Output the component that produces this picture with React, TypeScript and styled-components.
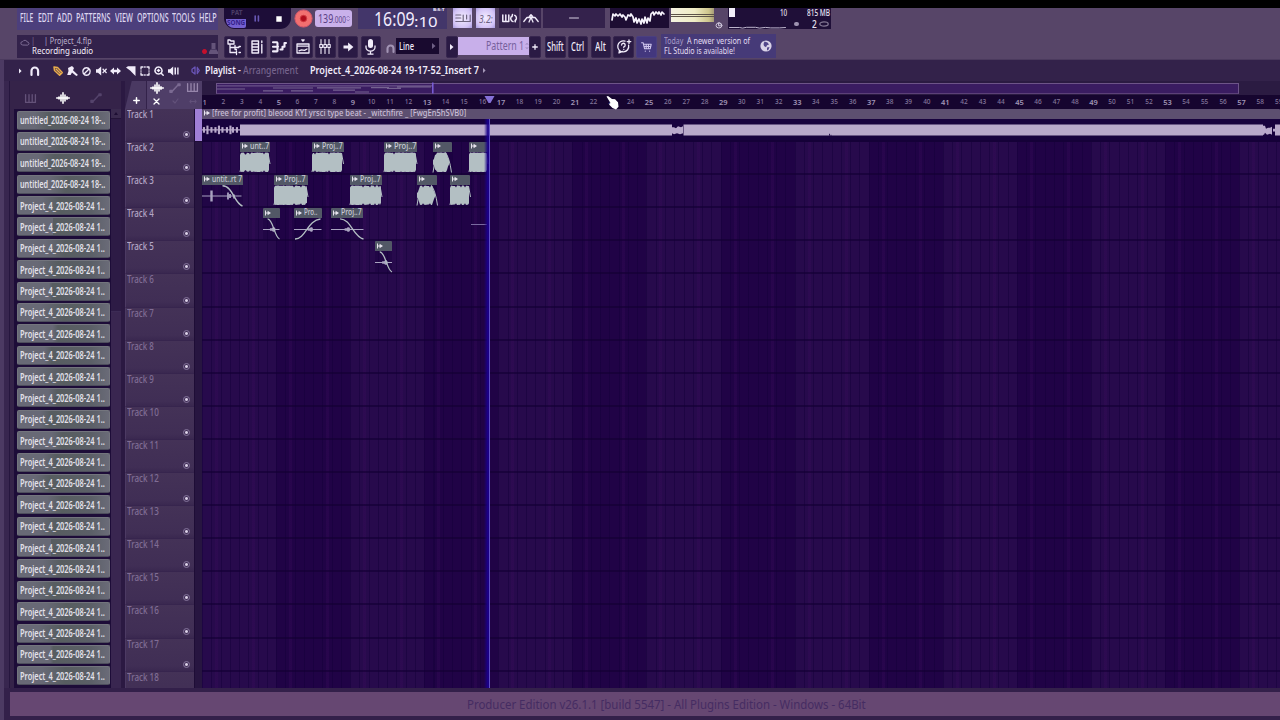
import React, { useLayoutEffect, useRef } from "react";
import styled, { createGlobalStyle, css } from "styled-components";

const Global = createGlobalStyle`
  * { box-sizing: border-box; }
  body { margin: 0; background: #000; overflow: hidden; font-family: "Noto Sans", "Open Sans", sans-serif; }
  svg { display: block; flex: none; overflow: visible; }
`;

/* ---------- text squeezed to a fixed width ---------- */
const FitBox = styled.span<{ $w: number }>`
  display: block; flex: none; width: ${p => p.$w}px; white-space: pre; line-height: 1;
`;
const FitInner = styled.span`
  display: inline-block; transform-origin: 0 50%; white-space: pre;
`;
function Fit({ w, children }: { w: number; children: React.ReactNode }) {
  const ref = useRef<HTMLSpanElement>(null);
  useLayoutEffect(() => {
    const el = ref.current;
    if (el && el.offsetWidth) el.style.transform = `scaleX(${w / el.offsetWidth})`;
  }, [w, children]);
  return <FitBox $w={w}><FitInner ref={ref}>{children}</FitInner></FitBox>;
}

/* ---------- frame ---------- */
const Screen = styled.div`
  width: 1280px; height: 720px; display: flex; flex-direction: column; background: #000; overflow: hidden; padding-top: 8px;
`;
const Toolbar = styled.header`
  height: 52px; flex: none; background: #574568; display: flex; flex-direction: column; padding-left: 17px;
  border-bottom: 1px solid #4b3a5e;
`;
const ToolRow = styled.div<{ $h: number; $mt?: number }>`
  display: flex; align-items: flex-start; height: ${p => p.$h}px; margin-top: ${p => p.$mt || 0}px;
`;
const Block = styled.div<{ $w: number; $h: number; $ml?: number; $mt?: number; $bg?: string; $r?: string }>`
  flex: none; width: ${p => p.$w}px; height: ${p => p.$h}px; margin-left: ${p => p.$ml || 0}px; margin-top: ${p => p.$mt || 0}px;
  background: ${p => p.$bg || "transparent"}; border-radius: ${p => p.$r || 0};
  display: flex; align-items: center; justify-content: center; color: #f1ecfa;
`;
const Menu = styled.nav`
  flex: none; width: 201px; height: 22px; background: #4c3f7c; color: #ddd6f0; display: flex; align-items: center; padding: 0 0 2px 3px;
  font-size: 12.5px; font-weight: 500;
`;
const MenuItem = styled.span<{ $gap: number }>`margin-right: ${p => p.$gap}px;`;
const Hint = styled.div`
  flex: none; width: 201px; height: 23px; background: #33224b; display: flex; align-items: stretch; color: #cfc6dc; font-size: 9.5px;
`;
const HintLines = styled.div`display: flex; flex-direction: column; gap: 1.5px; padding-top: 1px; width: 170px; color: #c9c0d8;`;
const HintLine = styled.div<{ $strong?: boolean }>`
  display: flex; align-items: center; height: 9px; gap: 10px; padding-left: ${p => (p.$strong ? 0 : 0)}px;
  color: ${p => (p.$strong ? "#f3eefa" : "#bdb3cd")};
`;
const HintIcons = styled.div`display: flex; align-items: flex-end; gap: 2px; padding-bottom: 4px;`;

const Pill = styled.div`
  flex: none; width: 67px; height: 21px; margin-left: 6px; background: #1d0d38; border-radius: 0 0 11px 11px; display: flex; overflow: hidden; align-items: stretch;
`;
const ModeSwitch = styled.div`width: 22px; display: flex; flex-direction: column; align-items: center; font-size: 7px; font-weight: 700;`;
const PatLabel = styled.div`height: 11px; padding: 1px 0 0 2px; color: #4b3d66;`;
const SongLabel = styled.div`
  height: 8.5px; width: 20px; margin-left: 2px; background: #7460cf; color: #33208a; border-radius: 0 0 2px 8px; padding: 0 0 0 1px;
`;
const PillCell = styled.div`width: 22px; display: flex; align-items: center; justify-content: center;`;
const Tempo = styled.div`
  flex: none; width: 37px; height: 17px; margin: 2px 0 0 2px; background: #c9b1ea; border-radius: 3px; display: flex; align-items: center; padding-left: 3px;
  color: #5a4185; font-size: 13px;
`;
const TempoSmall = styled.span`font-size: 9.5px; padding-top: 3px;`;
const Clock = styled.div`
  flex: none; width: 89px; height: 21px; margin-left: 6px; background: #43366a; display: flex; align-items: center; padding-left: 15.5px; color: #f1ecff; font-size: 20px;
`;
const ClockTail = styled.div`display: flex; flex-direction: column; font-size: 14px; height: 21px; justify-content: space-between;`;
const ClockUnit = styled.div`font-size: 4px; font-weight: 700; padding-left: 19px; height: 4px; line-height: 1;`;
const Glow = styled.div<{ $ml: number }>`
  flex: none; width: 19px; height: 20px; margin: 0 0 0 ${p => p.$ml}px; display: flex; align-items: center; justify-content: center;
  background: radial-gradient(#f4edff, #d3c3f6 70%, #a99be0); color: #6a6080; font-size: 11px; font-style: italic;
`;
const Meter = styled.div`
  flex: none; width: 43px; height: 14px; margin-left: 2px; display: flex; flex-direction: column; gap: 1px; background: #5d5448;
`;
const MeterBar = styled.div<{ $h: number }>`height: ${p => p.$h}px; background: linear-gradient(90deg, #f4f2e0, #efecc4 55%, #cdc58c 88%, #a69b78);`;
const MeterSide = styled.div`flex: none; width: 10px; height: 22px; display: flex; align-items: flex-end; justify-content: center;`;
const Cpu = styled.div`
  flex: none; width: 103px; height: 21px; margin-left: 4px; background: #1f0f38; color: #e8e2f2; display: flex; font-size: 9px; font-weight: 500;
`;
const CpuGraph = styled.div`width: 60px; height: 21px; display: flex; flex-direction: column; justify-content: space-between; padding: 0 1px;`;
const CpuTop = styled.div`display: flex; justify-content: space-between; align-items: flex-start; height: 10px;`;
const CpuBar = styled.div`width: 6px; height: 9px; background: #f2eefa;`;
const CpuMem = styled.div`flex: 1; display: flex; flex-direction: column; align-items: flex-end; justify-content: space-between; padding-right: 1px;`;
const CpuVoices = styled.div`display: flex; align-items: center; gap: 2px; height: 10px; font-size: 10px; padding-right: 1px;`;
const CpuDot = styled.i`width: 5px; height: 4px; border-radius: 2px; background: #9e93b0; margin-right: 11px;`;

const ToolButton = styled.div<{ $w?: number; $ml?: number; $blue?: boolean }>`
  flex: none; width: ${p => p.$w || 20.5}px; height: 22px; margin-left: ${p => (p.$ml === undefined ? 2.25 : p.$ml)}px; margin-top: .5px;
  background: ${p => (p.$blue ? "#43377e" : "#2a1a44")}; border: 1px solid ${p => (p.$blue ? "#4a3f80" : "#37264f")}; border-radius: 2px;
  display: flex; align-items: center; justify-content: center; color: #f1ecfa; font-size: 12px; font-weight: 500;
`;
const SnapBox = styled.div`
  flex: none; width: 43px; height: 16px; margin: 3px 0 0 1px; background: #190a2f; display: flex; align-items: center; justify-content: space-between; padding: 0 3px;
  color: #f1ecfa; font-size: 10px; font-weight: 500;
`;
const PatternName = styled.div`
  flex: none; width: 71px; height: 18px; margin-top: 2px; background: #c8afea; color: #76609c; font-size: 13px; display: flex; align-items: center; justify-content: flex-end; gap: 1px;
  padding-bottom: 1px;
`;
const News = styled.div`
  flex: none; width: 115px; height: 24px; margin-left: 4px; margin-top: -1px; background: #463a78; display: flex; align-items: center; color: #e2dcf2; font-size: 9.5px;
  padding-left: 3px;
`;
const NewsLines = styled.div`display: flex; flex-direction: column; gap: 0; width: 96px;`;
const NewsLine = styled.div`display: flex; gap: 4px; height: 10px; align-items: center;`;
const Faint = styled.span`color: #a79cc8;`;

const TitleBar = styled.div`
  height: 21px; flex: none; background: #33224a; display: flex; align-items: center; color: #f1ecfa; font-size: 10.5px; font-weight: 600;
  padding-left: 15px; border-left: 4px solid #4c3a63;
`;
const TitleIcons = styled.div`display: flex; align-items: center; width: 180px; flex: none; padding-top: 1px;`;
const Muted = styled.span`color: #75628c; font-weight: 500;`;

/* ---------- work area ---------- */
const Work = styled.main`height: 607px; flex: none; display: flex; background: #2b1942;`;
const Edge = styled.div`width: 10px; flex: none; background: #38264f; border-left: 4px solid #4c3a63; border-right: 1px solid #26163e;`;
const Picker = styled.aside`width: 111px; flex: none; display: flex; flex-direction: column; background: #352349;`;
const PickerTabs = styled.div`height: 28px; flex: none; display: flex; align-items: center; gap: 20px; padding: 6px 0 0 15px;`;
const PickerBody = styled.div`flex: 1; display: flex; min-height: 0;`;
const PickerList = styled.div`
  width: 97px; margin-left: 4px; flex: none; background: #1d0c38; display: flex; flex-direction: column; gap: 2.38px; padding: 1.5px 0 0 2.5px; overflow: hidden;
`;
const PickerItem = styled.div<{ $i: number }>`
  flex: none; height: 19px; width: 93px; border-radius: 2px; border: 1px solid #73757d; border-bottom-color: #4d4d5c;
  background: linear-gradient(90deg, #686976 0 ${p => 18 + ((p.$i * 13) % 22)}%, #575d60 ${p => 34 + ((p.$i * 13) % 20)}%, #5b5f67 80%, #6a6b78);
  display: flex; align-items: center; padding-left: 2px; color: #e3e1ea; font: 600 10px "Noto Sans", sans-serif;
`;
const PickerScroll = styled.div`width: 10px; flex: none; background: #241438; display: flex; flex-direction: column; align-items: center;`;
const ScrollButton = styled.div`width: 10px; height: 9px; background: #3a2a4e; display: flex; align-items: center; justify-content: center;`;
const ScrollThumb = styled.div`width: 10px; height: 193px; margin-top: 1px; background: #2d1b45; border-bottom: 1px solid #3c2b55;`;
const ScrollRest = styled.div`width: 10px; flex: 1; background: #392650;`;

const Arrange = styled.section`flex: 1; min-width: 0; display: flex; flex-direction: column; margin-left: 4px;`;
const Head = styled.div`height: 28px; flex: none; display: flex;`;
const Corner = styled.div`width: 77px; flex: none; display: flex; background: #33224a;`;
const CornerAdd = styled.div`
  width: 21px; height: 28px; background: #4a3962; clip-path: polygon(32% 0, 100% 0, 100% 100%, 0 100%); display: flex; align-items: flex-end; justify-content: center; padding: 0 0 5.5px 2px;
`;
const CornerGrid = styled.div`
  width: 56px; height: 28px; border-left: 1px solid #33224a; background: #4f3e68; display: grid; grid-template-columns: 19px 18px 17px; grid-template-rows: 13px 14px; place-items: center;
`;
const HeadRight = styled.div`flex: 1; min-width: 0; display: flex; flex-direction: column;`;
const Overview = styled.div`height: 14px; flex: none; background: #2b1b42; display: flex; padding: 1.5px 0 1.5px 14px;`;
const OverviewTrack = styled.div`
  width: 1023px; height: 11.5px; background: #3a1c61; border: 1px solid #6d5488; border-top-width: 1.5px; border-bottom-color: #5c4079; display: flex;
`;
const Ruler = styled.div`
  position: relative; height: 14px; flex: none; background: #16052f; display: flex; align-items: center; overflow: hidden;
`;
const RulerMark = styled.span<{ $major: boolean }>`
  flex: none; width: 18.52px; text-align: center; color: ${p => (p.$major ? "#a195b6" : "#83769b")};
  font: ${p => (p.$major ? "600 7.5px" : "500 6.5px")} "Noto Sans", sans-serif; line-height: 14px;
  &:first-child { margin-left: -6.5px; color: #a195b6; font-size: 7.5px; }
`;
const Marker = styled.div`position: absolute; left: 281.5px; top: 1px;`;

const Rows = styled.div`position: relative; flex: 1; min-height: 0; display: flex;`;
const Headers = styled.div`width: 77px; flex: none; overflow: hidden; background: #1e0d36;`;
const HeaderRow = styled.div`height: 33.1px; display: flex;`;
const TrackName = styled.div<{ $used: boolean }>`
  width: 69px; height: 33.1px; display: flex; justify-content: space-between; padding: 0 4px 0 .5px; border-left: 1px solid #4c3a63;
  background: linear-gradient(#443257, #402e55 85%, #3a2850); border-bottom: 1px solid #37254e;
  color: ${p => (p.$used ? "#b3a6c6" : "#806d95")}; font: 500 10px "Noto Sans", sans-serif; line-height: 1;
`;
const Led = styled.i`
  align-self: flex-end; width: 7px; height: 7px; margin-bottom: 3px; border-radius: 50%; border: 1px solid #84749b; background: radial-gradient(#e0d6ec 25%, #412f57 55%);
`;
const HeaderStrip = styled.div<{ $on: boolean }>`
  width: 7px; margin-left: 1px; height: ${p => (p.$on ? 32 : 33.1)}px; background: ${p => (p.$on ? "#a07fd6" : "#271540")};
`;
const Lanes = styled.div`position: relative; flex: 1; min-width: 0; overflow: hidden;
  background:
    repeating-linear-gradient(90deg, rgba(20,0,58,.5) 0 1px, transparent 1px 9.26px),
    repeating-linear-gradient(90deg, transparent 0 13px, rgba(58,12,92,.3) 13px 16px, transparent 16px 37.04px),
    repeating-linear-gradient(90deg, #270a4c 0 74.08px, #200346 74.08px 148.16px);
`;
const Lane = styled.div<{ $first?: boolean }>`
  position: relative; height: 33.1px; border-bottom: 2px solid rgba(20,0,52,.62);
  ${p => p.$first && css`background: #1a0440;`}
`;
const Clip = styled.div<{ $x: number; $w: number }>`
  position: absolute; left: ${p => p.$x}px; top: 0; width: ${p => p.$w}px; height: 31px; background: rgba(22,0,60,.35);
`;
const ClipHead = styled.div<{ $audio?: boolean }>`
  height: 9.5px; background: ${p => (p.$audio ? "#5d4f70" : "#525866")}; border-radius: 1px 1px 0 0; display: flex; align-items: center; gap: 2px; padding-left: 2px;
  color: ${p => (p.$audio ? "#c9bdd6" : "#c9cbd6")}; font: 500 8.5px "Noto Sans", sans-serif; padding-bottom: ${p => (p.$audio ? 1.5 : 1)}px;
`;
const Trace = styled.div<{ $x: number; $y: number; $w: number }>`
  position: absolute; left: ${p => p.$x}px; top: ${p => p.$y}px; width: ${p => p.$w}px; height: 1px; background: #7a6aa0;
`;
const Playhead = styled.div`
  position: absolute; left: 281.5px; top: 9.5px; bottom: 0; width: 6.5px; border-right: 1.5px solid #5f50c4;
  background: linear-gradient(90deg, rgba(30,0,150,0), rgba(26,0,140,.9) 70%);
`;
const Cursor = styled.div`position: absolute; left: 606px; top: 95px; z-index: 5;`;

const Bottom = styled.footer`
  flex: 1; display: flex; background: #33204a; padding: 4px 0 4px 6px; border-left: 4px solid #4c3a63;
`;
const BottomBar = styled.div`
  flex: 1; background: #664772; color: #452c62; display: flex; align-items: center; justify-content: center; font-size: 12.5px; padding: 3px 0 0 43px;
`;

/* ---------- icons ---------- */
type IcoProps = { w: number; h: number; c?: string; s?: number; fill?: boolean; d: string };
const Ico = ({ w, h, c = "#f1ecfa", s = 1.2, fill, d }: IcoProps) => (
  <svg width={w} height={h} viewBox={`0 0 ${w} ${h}`}>
    <path d={d} fill={fill ? c : "none"} stroke={fill ? "none" : c} strokeWidth={s} strokeLinejoin="round" strokeLinecap="round" />
  </svg>
);
const WaveIcon = ({ c = "#fff" }) => (
  <Ico w={14} h={12} c={c} s={1.6} d="M.7 6h12.6M3 5v2M5 3v6M7 .8v10.4M9 3v6M11 4.7v2.6" />
);
const KeysIcon = ({ c = "#6d5c82" }) => <Ico w={11} h={9} c={c} s={1.3} d="M.6.6v7.8h9.8V.6M4 .6v7M7.2 .6v7" />;
const LineIcon = ({ c = "#6d5c82" }) => <Ico w={12} h={10} c={c} s={1.5} d="M1 9h1.5L9 2M9 1h2v1.5H9zM1 7.5v1.8h2V7.6z" />;
const ArrowHead = ({ c = "#f1ecfa" }) => <Ico w={4} h={6} c={c} fill d="M0 0l3.5 3L0 6z" />;
const ClipIcon = () => <Ico w={6} h={6} c="#e8e4ee" fill d="M0 .5h1v5H0zM1 2.4h1.6V.8L6 3 2.6 5.2V3.6H1z" />;

/* ---------- data ---------- */
type Shape = "full" | "out" | "in" | "fade" | "hit";
type ClipData = { x: number; w: number; label?: string; lw?: number; shape: Shape };
const lanes: ClipData[][] = [
  [],
  [
    { x: 38, w: 30, label: "unt..7", lw: 19, shape: "full" },
    { x: 110, w: 31.5, label: "Proj..7", lw: 21, shape: "full" },
    { x: 182, w: 33, label: "Proj..7", lw: 23, shape: "full" },
    { x: 231, w: 18.5, shape: "fade" },
    { x: 266.5, w: 19, shape: "full" },
  ],
  [
    { x: 0, w: 40.5, label: "untit..rt 7", lw: 30, shape: "hit" },
    { x: 72, w: 34, label: "Proj..7", lw: 22, shape: "full" },
    { x: 148, w: 32, label: "Proj..7", lw: 21, shape: "full" },
    { x: 214.5, w: 20.5, shape: "fade" },
    { x: 247.5, w: 20.5, shape: "full" },
  ],
  [
    { x: 61, w: 16.5, shape: "out" },
    { x: 92, w: 27.5, label: "Pro..", lw: 13, shape: "in" },
    { x: 128.5, w: 32.5, label: "Proj..7", lw: 21, shape: "out" },
  ],
  [{ x: 173, w: 17, shape: "out" }],
  ...Array.from({ length: 13 }, () => [] as ClipData[]),
];
const pickerItems = Array.from({ length: 27 }, (_, i) => (i < 4 ? "untitled_2026-08-24 18-.." : "Project_4_2026-08-24 1.."));

function noise(i: number) {
  const v = Math.sin(i * 12.9898) * 43758.5453;
  return v - Math.floor(v);
}
function solidWave(w: number, seed: number, taper: boolean) {
  const top: string[] = [];
  const bottom: string[] = [];
  for (let x = 0; x <= w; x += 1) {
    const t = x / w;
    const env = taper ? Math.max(0.25, Math.min(1, Math.sin(Math.min(1, t * 1.02) * Math.PI) * 2)) : t < 0.03 || t > 0.98 ? 0.8 : 1;
    const dip = noise(x + seed) > 0.86 ? 1.9 : noise(x + seed) * 0.6;
    const a = Math.max(1.5, 9.8 * env - dip);
    top.push(`${x} ${(10.3 - a).toFixed(1)}`);
    bottom.unshift(`${x} ${(10.3 + a).toFixed(1)}`);
  }
  return `M${top.join("L")}L${bottom.join("L")}Z`;
}
function Wave({ shape, w, seed }: { shape: Shape; w: number; seed: number }) {
  const pale = "#b3bfc3";
  const thin = "#a9a3c0";
  return (
    <svg width={w} height={21} viewBox={`0 0 ${w} 21`}>
      {shape === "full" && <>
        <path d={solidWave(w - 1, seed, false)} fill={pale} />
        <path d={`M0 20L1.5 12M${w - 2} 1L${w} 12`} stroke={pale} fill="none" />
      </>}
      {shape === "fade" && <>
        <path d={solidWave(w - 2, seed, true)} fill={pale} />
        <path d={`M${w - 6} .5Q${w - 2} 6 ${w} 20.5M0 20.5L2.5 5`} stroke={pale} fill="none" />
      </>}
      {shape === "out" && <>
        <path d={`M0 11.5H${w}`} stroke={thin} />
        <path d={`M${w * 0.42} 10.2h2l1-1h1.5l1.5 2.3-1.5 2.2h-1.5l-1-1h-2z`} fill={thin} />
        <path d={`M${w * 0.28} .8C${w * 0.62} 1 ${w * 0.68} 19 ${w} 21`} stroke={pale} strokeWidth={1.3} fill="none" />
      </>}
      {shape === "in" && <>
        <path d={`M0 11.5H${w}`} stroke={thin} />
        <path d={`M${w * 0.5} 10.2h2l1-1h1.5l1 2.3-1 2.2h-1.5l-1-1h-2z`} fill={thin} />
        <path d={`M1 21C${w * 0.42} 21 ${w * 0.5} 2 ${w - 1} 1`} stroke={pale} strokeWidth={1.3} fill="none" />
      </>}
      {shape === "hit" && <>
        <path d={`M0 11H${w - 1}`} stroke={thin} />
        <path d="M9.5 5.5v11" stroke={thin} strokeWidth={2.4} />
        <path d="M26 7.5v7M28 9v4M32 9.5v4" stroke={thin} strokeWidth={1.8} />
        <path d={`M20.5 .8C31 1 32 18 ${w} 21`} stroke={pale} strokeWidth={1.4} fill="none" />
      </>}
    </svg>
  );
}
function AudioWave() {
  const bumps = [2, 5.5, 9.5, 13.5, 17, 20.5, 25, 28.5, 31, 35];
  return (
    <svg width={1078} height={21} viewBox="0 .7 1078 21">
      <g fill="#b9a9cb">
        <path d="M0 10.9h38v1.4H0z" />
        {bumps.map((x, i) => <rect key={x} x={x - 1.1} y={11.6 - (i % 3 === 1 ? 4.3 : 2.8)} width={2.1} height={i % 3 === 1 ? 8.6 : 5.6} />)}
        <path d="M38 6.2H470v11H38zM470 9h2l2 1 2-2 3 1 2-1v7l-3 1-3-1-3 1-2-1zM481.5 6.2H1061v11H481.5z" />
        <path d="M1061 7.5h2l1 3 2-1 2 0 2-1v8l-2-1-3 1-2-2-1 2h-2zM1071 10.5h2V6.2h5v11h-5v-4h-2z" />
      </g>
      <path d="M627.5 15.5v2M629 16.5v1" stroke="#2a1450" />
    </svg>
  );
}

export default function App() {
  return (
    <Screen>
      <Global />
      <Toolbar>
        <ToolRow $h={26}>
          <Menu>
            {([["FILE", 13.5, 4.5], ["EDIT", 15.5, 3], ["ADD", 15, 4.5], ["PATTERNS", 34.5, 4], ["VIEW", 18, 4.5], ["OPTIONS", 31.5, 3.5], ["TOOLS", 23, 4], ["HELP", 18, 0]] as [string, number, number][]).map(([t, w, g]) => (
              <MenuItem key={t} $gap={g}><Fit w={w}>{t}</Fit></MenuItem>
            ))}
          </Menu>
          <Pill>
            <ModeSwitch>
              <PatLabel><Fit w={11}>PAT</Fit></PatLabel>
              <SongLabel><Fit w={18}>SONG</Fit></SongLabel>
            </ModeSwitch>
            <PillCell><Ico w={6} h={7} c="#6857b4" s={1.6} d="M1.2 1v5M4.4 1v5" /></PillCell>
            <PillCell><Ico w={6} h={6} c="#fff" fill d="M.3.3h5.4v5.4H.3z" /></PillCell>
          </Pill>
          <Block $w={20} $h={20} $ml={2}>
            <svg width="19" height="19" viewBox="0 0 19 19">
              <circle cx="9.5" cy="9.5" r="8.6" fill="#f27070" stroke="#d4586c" />
              <circle cx="9.5" cy="9.5" r="3.2" fill="#b00c1c" stroke="#d23a40" />
            </svg>
          </Block>
          <Tempo>
            <Fit w={15}>139</Fit><TempoSmall><Fit w={13}>.000</Fit></TempoSmall>
            <Ico w={4} h={7} c="#8066ac" s={0.7} d="M1 2.4L2.2 1l1.2 1.4M1 4.6L2.2 6l1.2-1.4" />
          </Tempo>
          <Clock>
            <Fit w={40.5}>16:09</Fit>
            <ClockTail><ClockUnit><Fit w={11}>B:S:T</Fit></ClockUnit><Fit w={24}>:10</Fit></ClockTail>
          </Clock>
          <Glow $ml={6}><Ico w={16} h={9} c="#6f6580" s={1.2} d="M.8 1h5M.8 4h5M.8 7.5h14.4V1M8.2 1v6M11.6 1v4" /></Glow>
          <Glow $ml={4}><Fit w={14}>3.2:</Fit></Glow>
          <Block $w={20} $h={20} $ml={4} $bg="#34224c">
            <Ico w={15} h={9} s={1.5} d="M.8 1v6.5h6V1M3.8 1v6M10 2a3.2 3.2 0 0 0 1 5.6M12.8 1.4a3.2 3.2 0 0 1 .2 5.4M10.5.5l-.5 2M13.2 7.8l.3-2" />
          </Block>
          <Block $w={20} $h={20} $ml={2} $bg="#34224c">
            <Ico w={16} h={9} s={1.3} d="M.8 7.5L4 3.5h3L9 3.5h3l3.2 4M8 .6v4M6.3 2.4L8 .6l1.7 1.8M7.5 4.5L6 8M8.5 4.5L10 8" />
          </Block>
          <Block $w={62} $h={20} $ml={2} $bg="#34224c"><Ico w={10} h={2} c="#d5cde0" s={1} d="M.5 1h9" /></Block>
          <Block $w={59} $h={20} $ml={5} $bg="#1d0d33">
            <Ico w={58} h={14} c="#f5f2fb" s={1.7} d="M1 9l1-6 2 2 1-2 2 2 2-2 2 3 1-2 2 2 1 3 2-5 2 1 1-2 2 3 1 5 2-4 1 5 2-4 2 5 1-5 2 4 1-6 2 6 1-5 2 3 1-7 2-2 1 3 2-3 2 2 1-2 2 3 1-3 2 2" />
          </Block>
          <Meter><MeterBar $h={5.5} /><MeterBar $h={1} /><MeterBar $h={5.5} /></Meter>
          <MeterSide><Ico w={8} h={8} c="#cfc7dc" s={1} d="M4 .8a3 2.6 0 1 0 3 3zM4 .8a3 3 0 0 1 3 3H4z" /></MeterSide>
          <Cpu>
            <CpuGraph>
              <CpuTop><CpuBar /><Fit w={7}>10</Fit></CpuTop>
              <Ico w={58} h={3} c="#bdb4cc" s={1} d="M.5 1.5h10l3 .6 4-.8h9l4 .8 6-.7 5 .5h9l6-.4" />
            </CpuGraph>
            <CpuMem>
              <Fit w={23}>815 MB</Fit>
              <CpuVoices>
                <CpuDot />
                <Fit w={5}>2</Fit>
                <svg width="10" height="6" viewBox="0 0 10 6"><ellipse cx="5" cy="3" rx="4.2" ry="2.1" fill="none" stroke="#827693" strokeWidth="1.3" /></svg>
              </CpuVoices>
            </CpuMem>
          </Cpu>
        </ToolRow>
        <ToolRow $h={24} $mt={1}>
          <Hint>
            <Block $w={15} $h={12} $mt={1}><Ico w={10} h={7} c="#7d6c94" s={1} d="M2.4 6a1.7 1.7 0 0 1 .3-3.4 2.5 2.5 0 0 1 4.6.5A1.5 1.5 0 0 1 8 6z" /></Block>
            <HintLines>
              <HintLine><Fit w={2}>|</Fit><Fit w={48}>| Project_4.flp</Fit></HintLine>
              <HintLine $strong><Fit w={61}>Recording audio</Fit></HintLine>
            </HintLines>
            <HintIcons>
              <Ico w={5} h={5} c="#c4102c" fill d="M2.5 0a2.5 2.5 0 1 0 .01 0z" />
              <Ico w={9} h={11} c="#65547a" fill d="M2.5 0h4v6H2.5zM1.5 6.5h6L9 9v2H0V9z" />
            </HintIcons>
          </Hint>
          <ToolButton $ml={6}><Ico w={14} h={16} s={1.3} d="M1 1h2l1 1h3v3H1zM3 5v8.5h6M3 8.5h5M8 6.5v4h1.5M12 7.5h1.4M9.5 12v3.5M12 13.5h1.4M8.8 8.5h3" /></ToolButton>
          <ToolButton><Ico w={12} h={14} s={1.4} d="M1 1h6.5v12H1zM1.5 4h5.5M1.5 7h5.5M1.5 10h5.5M10.8 1v1.5M10.8 4.5V13" /></ToolButton>
          <ToolButton><Ico w={15} h={12} s={2.1} d="M1 1.2h4M1 5.8h5M1 10.4h4M5.5 2v3M5.5 7v3M8.5 8.5h2V5.8h2V2H14" /></ToolButton>
          <ToolButton><Ico w={14} h={15} s={1.3} d="M1 5h12v9H1zM1 7.2h12M3 11.8l2.5-1 3 .5L11 10M5.8.8h2.4L7 2.2z" /></ToolButton>
          <ToolButton><Ico w={12} h={15} s={1.1} d="M2 .5v4.8M2 9v5.5M6 .5v4.8M6 9v5.5M10 .5v4.8M10 9v5.5M.8 5.5h2.6v3H.8zM4.8 5.5h2.6v3H4.8zM8.8 5.5h2.4v3H8.8z" /></ToolButton>
          <ToolButton><Ico w={11} h={10} fill d="M.5 3.6h4.6V.6L10.4 5 5.1 9.4v-3H.5z" /></ToolButton>
          <ToolButton>
            <svg width="11" height="16" viewBox="0 0 11 16"><rect x="3" y="0" width="5" height="9" rx="2.5" fill="#f1ecfa" /><path d="M1 6.5v1.8a4.5 3.8 0 0 0 9 0V6.5M5.5 12v3M2.5 15.2h6" fill="none" stroke="#f1ecfa" strokeWidth="1.3" /></svg>
          </ToolButton>
          <Block $w={10} $h={20} $ml={4} $mt={3}><Ico w={9} h={9} c="#a294b4" s={2.1} d="M1.5 8V4.5a3 3 0 0 1 6 0V8" /></Block>
          <SnapBox><Fit w={15}>Line</Fit><ArrowHead c="#6f6085" /></SnapBox>
          <ToolButton $ml={6.5} $w={12}><ArrowHead /></ToolButton>
          <PatternName><Fit w={38}>Pattern 1</Fit><Ico w={4} h={8} c="#9480b8" s={0.8} d="M1 2.6L2 1.2l1 1.4M1 5.4l1 1.4 1-1.4" /></PatternName>
          <ToolButton $ml={0} $w={12}><Ico w={6} h={6} s={1.3} d="M3 .7v4.6M.7 3h4.6" /></ToolButton>
          <ToolButton $ml={4.5}><Fit w={16.5}>Shift</Fit></ToolButton>
          <ToolButton><Fit w={13.5}>Ctrl</Fit></ToolButton>
          <ToolButton><Fit w={11}>Alt</Fit></ToolButton>
          <ToolButton>
            <Ico w={16} h={15} s={1.3} d="M9 2.2a5.5 5.5 0 1 0 3.6 4M3.5 11.5L3 14l3.5-1.6M5.6 6a1.8 1.8 0 1 1 2.2 1.8v.7M7.8 10.4v.1M13 .8v3.6M11.2 2.6h3.6" />
          </ToolButton>
          <ToolButton $blue><Ico w={11} h={10} c="#cfc5ee" s={1.1} d="M.6.8h1.6l1.4 6h5.6l1-4.6H2.6M3.2 4.5h6.6M5.2 2.5v4M7.4 2.5v4M4.3 9v.2M8.6 9v.2" /></ToolButton>
          <News>
            <NewsLines>
              <NewsLine><Faint><Fit w={19}>Today</Fit></Faint><Fit w={63}>A newer version of</Fit></NewsLine>
              <NewsLine><Fit w={71}>FL Studio is available!</Fit></NewsLine>
            </NewsLines>
            <svg width="12" height="12" viewBox="0 0 12 12"><circle cx="6" cy="6" r="5.6" fill="#d9d2e8" /><path d="M4.5 1.5l3 1 1.5 2-2 .8-1 2-2-1.4-.5-2zM7 7.5l2.5-.5-1 2.8-1.5.6z" fill="#52468a" /></svg>
          </News>
        </ToolRow>
      </Toolbar>

      <TitleBar>
        <TitleIcons>
          <Ico w={3} h={6} fill d="M0 .5L2.6 3 0 5.5z" />
          <Block $w={10} $h={12} $ml={7.5}><Ico w={10} h={10} s={2.2} d="M1.5 9V4.8a3.3 3.3 0 0 1 6.6 0V9" /></Block>
          <Block $w={12} $h={12} $ml={12}><Ico w={10} h={10} c="#e9ad4b" s={1.5} d="M1 1l3.5.5L9.2 6.6 6.6 9.2 1.5 4.5zM3 3l4.5 4.5" /></Block>
          <Block $w={12} $h={12} $ml={2.5}><Ico w={11} h={10} fill d="M1 2L5 0l2 2-1 2.2L11 9 9.3 10 5 6.4 3.6 9H.2l1.3-4z" /></Block>
          <Block $w={12} $h={12} $ml={2.5}><Ico w={9} h={9} s={1.4} d="M4.5.8a3.7 3.7 0 1 0 .01 0zM2 7l5-5" /></Block>
          <Block $w={12} $h={12} $ml={2.5}><Ico w={11} h={10} fill d="M0 3.3h2L5.2.5v9L2 6.7H0zM6.2 3.2l.9-.9 1.5 1.6L10.1 2.3l.9.9L9.5 4.9 11 6.5l-.9.9-1.5-1.6-1.5 1.6-.9-.9 1.5-1.6z" /></Block>
          <Block $w={12} $h={12} $ml={2.5}><Ico w={11} h={8} fill d="M0 4L4 .6v2.2h3V.6L11 4 7 7.4V5.2H4v2.2z" /></Block>
          <Block $w={12} $h={12} $ml={3}><Ico w={10} h={10} fill d="M0 1.5L2 .2h7.5V10L5.8 6.2 4.4 4.8z" /></Block>
          <Block $w={12} $h={12} $ml={2}><Ico w={10} h={10} s={1.3} d="M1 3V1h2M7 1h2v2M9 7v2H7M3 9H1V7M4.6 1h.6M4.6 9h.6M1 4.8v.4M9 4.8v.4" /></Block>
          <Block $w={12} $h={12} $ml={2.5}><Ico w={10} h={10} s={1.5} d="M4.5 1a3.5 3.5 0 1 0 .01 0zM7.2 7.2l2 2M3.4 4.5h2.2M4.5 3.4v2.2" /></Block>
          <Block $w={12} $h={12} $ml={2.5}><Ico w={11} h={10} fill d="M0 3.3h2L5.2.5v9L2 6.7H0zM6.5 1.5H8v7H6.5zM9.2 1.5h1.4v7H9.2z" /></Block>
        </TitleIcons>
        <Block $w={10} $h={12} $ml={-8.5}><Ico w={9} h={9} c="#6a55b8" s={1.3} d="M1 3.2v2.6L4 8V1zM6.3 1.5v6M6.3 1.5l2 3-2 3" /></Block>
        <Block $w={40} $h={14} $ml={2.5}><Fit w={36}>Playlist -</Fit></Block>
        <Muted><Fit w={55}>Arrangement</Fit></Muted>
        <Block $w={172} $h={14} $ml={10}><Fit w={169}>Project_4_2026-08-24 19-17-52_Insert 7</Fit></Block>
        <Block $w={6} $h={8} $ml={1}><Ico w={3} h={5} c="#a497b8" fill d="M0 0l2.6 2.5L0 5z" /></Block>
      </TitleBar>

      <Work>
        <Edge />
        <Picker>
          <PickerTabs><KeysIcon c="#645279" /><WaveIcon /><LineIcon c="#54436b" /></PickerTabs>
          <PickerBody>
            <PickerList>
              {pickerItems.map((t, i) => <PickerItem key={i} $i={i}><Fit w={i < 4 ? 85.5 : 84.5}>{t}</Fit></PickerItem>)}
            </PickerList>
            <PickerScroll>
              <ScrollButton><Ico w={4} h={3} c="#1d0d33" fill d="M0 3l2-3 2 3z" /></ScrollButton>
              <ScrollThumb />
              <ScrollRest />
            </PickerScroll>
          </PickerBody>
        </Picker>
        <Arrange>
          <Head>
            <Corner>
              <CornerAdd><Ico w={7} h={7} c="#fff" s={1.5} d="M3.5 .8v5.4M.8 3.5h5.4" /></CornerAdd>
              <CornerGrid>
                <WaveIcon /><LineIcon c="#7b6a92" /><KeysIcon c="#9786ab" />
                <Ico w={7} h={7} c="#fff" s={1.3} d="M1 1l5 5M6 1L1 6" />
                <Ico w={7} h={6} c="#62517a" s={1.2} d="M1 3l2 2 3-4" />
                <Ico w={8} h={5} c="#62517a" s={1.1} d="M1 2.5h6M2 1L.8 2.5 2 4M6 1l1.2 1.5L6 4" />
              </CornerGrid>
            </Corner>
            <HeadRight>
              <Overview>
                <OverviewTrack>
                  <svg width="218" height="9" viewBox="0 0 218 9">
                    <path d="M0 1.8h216" stroke="#6a5288" strokeWidth="1.2" />
                    <path d="M0 5h28M46 6.8h20M56 4h40M74 6.8h22M100 3.8h44M116 6.2h22M154 3.6h18M138 8h14M170 4.4h14M180 2.8h34" stroke="#756290" strokeWidth="1.2" />
                    <path d="M215.8 -1.5v11" stroke="#7e63e0" strokeWidth="1.4" />
                  </svg>
                </OverviewTrack>
              </Overview>
              <Ruler>
                {Array.from({ length: 59 }, (_, i) => <RulerMark key={i} $major={i % 4 === 0 && i > 0}>{i + 1}</RulerMark>)}
                <Marker><Ico w={11} h={8} c="#8571d8" fill d="M.5 0h10L6.5 7h-2z" /></Marker>
              </Ruler>
            </HeadRight>
          </Head>
          <Rows>
            <Headers>
              {lanes.map((_, i) => (
                <HeaderRow key={i}>
                  <TrackName $used={i < 5}><Fit w={i < 9 ? 27 : 31.5}>{`Track ${i + 1}`}</Fit><Led /></TrackName>
                  <HeaderStrip $on={i === 0} />
                </HeaderRow>
              ))}
            </Headers>
            <Lanes>
              {lanes.map((clips, i) => (
                <Lane key={i} $first={i === 0}>
                  {i === 0 && (
                    <Clip $x={0} $w={1078}>
                      <ClipHead $audio><ClipIcon /><Fit w={254}>[free for profit] bleood KYI yrsci type beat - _witchfire _ [FwgEn5hSVB0]</Fit></ClipHead>
                      <AudioWave />
                    </Clip>
                  )}
                  {clips.map((c, k) => (
                    <Clip key={k} $x={c.x} $w={c.w}>
                      <ClipHead><ClipIcon />{c.label && <Fit w={c.lw || 20}>{c.label}</Fit>}</ClipHead>
                      <Wave shape={c.shape} w={c.w} seed={i * 31 + k * 7} />
                    </Clip>
                  ))}
                  {i === 3 && <Trace $x={268.5} $y={16} $w={16} />}
                </Lane>
              ))}
              <Playhead />
            </Lanes>
          </Rows>
        </Arrange>
      </Work>
      <Bottom>
        <BottomBar><Fit w={399}>Producer Edition v26.1.1 [build 5547] - All Plugins Edition - Windows - 64Bit</Fit></BottomBar>
      </Bottom>
      <Cursor>
        <Ico w={14} h={15} c="#fff" fill d="M.5 1.5L2 1l4 3 3 .2 3 3 .5 4.5L10 14.5 6.5 13 3 9.5 4.5 8z" />
      </Cursor>
    </Screen>
  );
}
